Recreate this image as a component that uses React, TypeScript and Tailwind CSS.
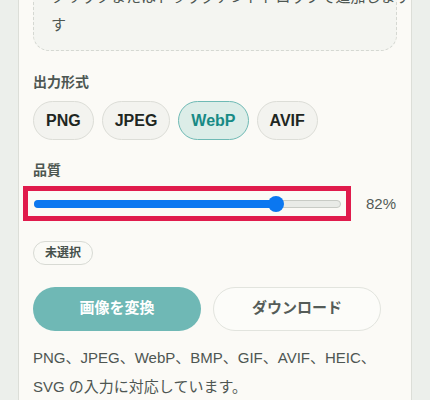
import { useState } from 'react';

const formats = ['PNG', 'JPEG', 'WebP', 'AVIF'];

export default function App() {
  const [format, setFormat] = useState('WebP');
  const quality = 82;

  return (
    <div
      className="min-h-[400px] bg-[#ecefeb] overflow-hidden"
      style={{ fontFamily: '"Liberation Sans", "Noto Sans CJK JP", sans-serif' }}
    >
      <div className="-mt-[60px] ml-[18px] w-[394px] border-x border-[#dcded8] bg-[#fbfaf6] px-[14px] pt-[18px] pb-6">
        {/* drop zone */}
        <div className="rounded-2xl border-[1.5px] border-dashed border-[#d5d8d2] bg-[#f4f5f1] px-[17px] pt-6 pb-[11px] text-[15px] leading-[28px] text-[#4e5752]">
          <p className="whitespace-nowrap">クリックまたはドラッグアンドドロップで追加します</p>
          <p>す</p>
        </div>

        {/* output format */}
        <h3 className="mt-[21px] text-[14px] font-bold leading-5 text-[#4d5752]">出力形式</h3>
        <div className="mt-[9px] flex gap-2">
          {formats.map((f) => {
            const active = f === format;
            return (
              <button
                key={f}
                onClick={() => setFormat(f)}
                className={
                  active
                    ? 'h-[39px] rounded-full border border-[#6fbab5] bg-[#dcede8] px-3 text-[16px] font-bold text-[#178a85]'
                    : 'h-[39px] rounded-full border border-[#dcddd7] bg-[#f3f3ef] px-3 text-[16px] font-bold text-[#1e2622]'
                }
              >
                {f}
              </button>
            );
          })}
        </div>

        {/* quality */}
        <h3 className="mt-5 text-[14px] font-bold leading-5 text-[#4d5752]">品質</h3>
        <div className="mt-[13px] flex items-center gap-[25px]">
          <div className="relative ml-px h-4 w-[307px]">
            <div className="absolute left-0 right-0 top-1/2 h-[8px] -translate-y-1/2 rounded-full border border-[#c8cbc5] bg-[#e9ebe7]" />
            <div className="absolute left-0 top-1/2 h-[8px] w-[242px] -translate-y-1/2 rounded-full bg-[#0b77f0]" />
            <div className="absolute left-[234px] top-0 h-4 w-4 rounded-full bg-[#0b77f0]" />
            {/* highlight annotation */}
            <div className="pointer-events-none absolute -left-[11px] -right-[10px] -top-[10px] -bottom-[9px] border-[5px] border-[#e01b4c]" />
          </div>
          <span className="text-[15px] text-[#535b57]">{quality}%</span>
        </div>

        {/* selection badge */}
        <div className="mt-[24px]">
          <span className="inline-flex h-6 items-center rounded-full border border-[#d8dad4] bg-[#fafaf6] px-[11px] text-[12px] font-bold text-[#47514c]">
            未選択
          </span>
        </div>

        {/* actions */}
        <div className="mt-[22px] flex gap-3">
          <button className="h-11 w-[168px] rounded-full bg-[#6fb8b5] text-[15px] font-bold text-white">
            画像を変換
          </button>
          <button className="h-11 w-[168px] rounded-full border border-[#e2e4de] bg-[#fcfcf9] text-[15px] font-bold text-[#555c58]">
            ダウンロード
          </button>
        </div>

        <p className="mt-3 text-[15px] leading-[29px] text-[#4e5652]">
          PNG、JPEG、WebP、BMP、GIF、AVIF、HEIC、
          <br />
          SVG の入力に対応しています。
        </p>
      </div>
    </div>
  );
}
